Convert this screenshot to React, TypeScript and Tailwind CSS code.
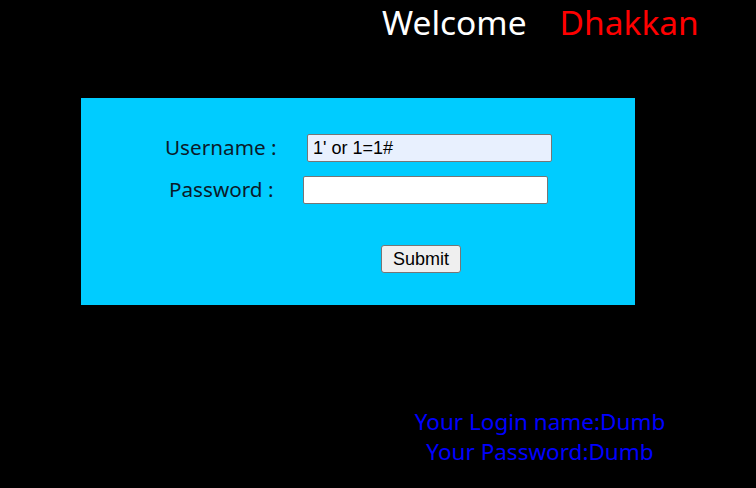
import React from "react";

const sans = { fontFamily: '"Noto Sans", "Open Sans", sans-serif' };

const App = () => {
    return (
        <div className="w-[756px] h-[488px] bg-black overflow-hidden font-['Noto_Sans',sans-serif]">
            {/* header */}
            <div className="pl-[382px] text-[33.5px] leading-[44px] text-white whitespace-nowrap">
                Welcome<span className="ml-[33px] text-[#ff0000]">Dhakkan</span>
            </div>

            {/* login box */}
            <div className="mt-[54px] ml-[81px] w-[554px] h-[207px] bg-[#00ccff]">
                <div className="flex flex-col pt-[36px]">
                    <div className="flex items-center h-[28px]">
                        <span className="ml-[84px] w-[142px] text-[20.7px] text-[#0b1a2a]">Username :</span>
                        <input
                            readOnly
                            value="1' or 1=1#"
                            className="w-[245px] h-[28px] px-[5px] bg-[#e8f0fe] border border-[#767676] rounded-[2px] text-[18px] text-black font-['Liberation_Sans',sans-serif] outline-none"
                        />
                    </div>
                    <div className="flex items-center h-[28px] mt-[14px]">
                        <span className="ml-[88px] w-[134px] text-[20.7px] text-[#0b1a2a]">Password :</span>
                        <input
                            readOnly
                            type="password"
                            className="w-[245px] h-[28px] bg-white border border-[#767676] rounded-[2px] outline-none"
                        />
                    </div>
                    <div className="flex mt-[41px]">
                        <button className="ml-[300px] w-[80px] h-[28px] bg-[#efefef] border border-[#767676] rounded-[3px] text-[18px] text-black font-['Liberation_Sans',sans-serif]">
                            Submit
                        </button>
                    </div>
                </div>
            </div>

            {/* result */}
            <div className="mt-[102px] ml-[324px] w-[432px] text-center text-[22.5px] leading-[30px] text-[#0000ff]" style={sans}>
                <div>Your Login name:Dumb</div>
                <div>Your Password:Dumb</div>
            </div>
        </div>
    );
};

export default App;
